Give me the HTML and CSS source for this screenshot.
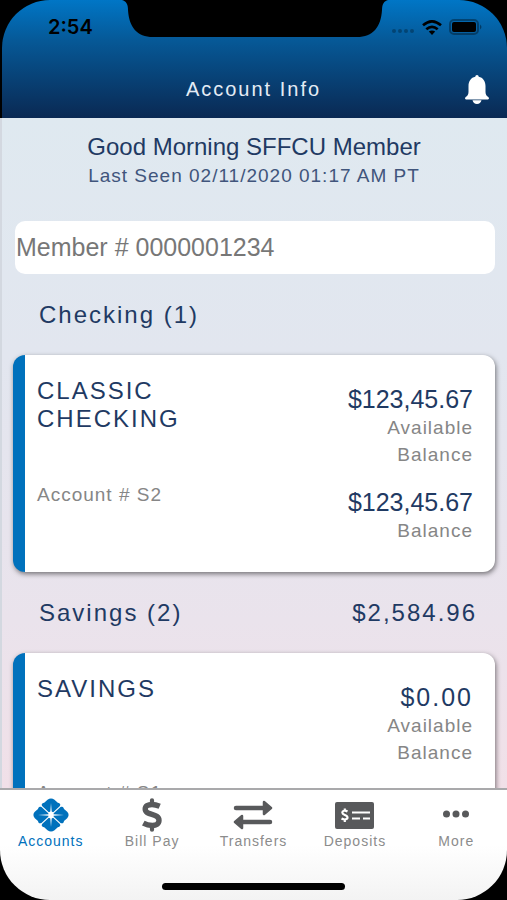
FILE: index.html
```
<!doctype html>
<html lang="en">

<head>
	<meta charset="utf-8">
	<title>Account Info</title>
	<meta name="theme-color" content="#0071bc"/>
	<meta name="viewport" content="width=device-width, initial-scale=1"/>
	<link rel="stylesheet" href="styles.css">
</head>

<body>
	<header>
		<svg class="notch" width="266" height="37" viewBox="0 0 266 37" aria-hidden="true">
			<path d="M0 0C4 1 6 4 6 10C7 27 15 37 31 37H235C251 37 259 27 260 10C260 4 262 1 266 0Z"/>
		</svg>
		<div class="status">
			<time>2:54</time>
			<div class="status-icons">
				<svg width="24" height="4" viewBox="0 0 24 4" aria-hidden="true">
					<g fill="#000" opacity=".28">
						<circle cx="3" cy="2" r="2"/><circle cx="9" cy="2" r="2"/><circle cx="15" cy="2" r="2"/><circle cx="21" cy="2" r="2"/>
					</g>
				</svg>
				<svg width="20" height="15" viewBox="0 0 20 15" aria-hidden="true">
					<path fill="none" stroke="#000" stroke-width="2.6" d="M1 5.3Q10-2.6 19 5.3M4.3 9.300Q10 4.300 15.7 9.300"/>
					<path d="M10 15L6.8 11.6Q10 9.2 13.2 11.6Z"/>
				</svg>
				<svg width="33" height="16" viewBox="0 0 33 16" aria-hidden="true">
					<rect x="1" y="1" width="28" height="14" rx="4" fill="none" stroke="#000" stroke-width="2" opacity=".35"/>
					<rect x="3" y="3" width="24" height="10" rx="2"/>
					<path d="M31 5.5Q34 8 31 10.5Z" opacity=".4"/>
				</svg>
			</div>
		</div>
		<div class="title">
			<h1>Account Info</h1>
			<button class="bell" type="button" aria-label="Notifications">
				<svg width="24" height="29" viewBox="0 0 24 29" aria-hidden="true">
					<path fill="#fff" d="M12 0C13 0 13.6 .7 13.7 1.800C18 2.500 20.500 6.500 20.500 11V17C20.500 19.500 21.800 21.200 23.300 22C24.400 23 24 24.500 23 24.500H1C0 24.500-.4 23 .7 22C2.200 21.200 3.500 19.500 3.500 17V11C3.500 6.500 6 2.500 10.300 1.800C10.400 .7 11 0 12 0ZM7.500 25.300H16.500C16 27.500 14.300 29 12 29S8 27.500 7.500 25.300Z"/>
				</svg>
			</button>
		</div>
	</header>

	<main>
		<div class="greeting">
			<h2>Good Morning SFFCU Member</h2>
			<p>Last Seen 02/11/2020 01:17 AM PT</p>
		</div>
		<input class="member" type="text" aria-label="Member number" value="Member # 0000001234" readonly>

		<section>
			<div class="group">
				<h2>Checking (1)</h2>
			</div>
			<article class="card">
				<h3>CLASSIC CHECKING</h3>
				<div class="figure">
					<div class="amount">$123,45.67</div>
					<div class="label">Available Balance</div>
				</div>
				<div class="number">Account # S2</div>
				<div class="figure">
					<div class="amount">$123,45.67</div>
					<div class="label">Balance</div>
				</div>
			</article>
		</section>

		<section>
			<div class="group">
				<h2>Savings (2)</h2>
				<span>$2,584.96</span>
			</div>
			<article class="card">
				<h3>SAVINGS</h3>
				<div class="figure">
					<div class="amount wide">$0.00</div>
					<div class="label">Available Balance</div>
				</div>
				<div class="number">Account # S1</div>
				<div class="figure">
					<div class="amount wide">$0.00</div>
				</div>
			</article>
		</section>
	</main>

	<nav>
		<div class="tabs">
			<a class="active" href="#accounts">
				<svg width="36" height="34" viewBox="0 0 36 34" aria-hidden="true">
					<g fill="#0071bc">
						<path d="M18 16.200L9.300 8.300C8 6.500 9 5.200 11.200 4.800L14.500 1.800Q18-.9 21.500 1.800L24.800 4.800C27 5.200 28 6.500 26.700 8.300Z"/>
						<path d="M18 17.800L9.300 25.700C8 27.500 9 28.800 11.200 29.200L14.500 32.200Q18 34.900 21.500 32.200L24.800 29.200C27 28.800 28 27.500 26.700 25.700Z"/>
						<path d="M17.200 17L8.500 9.100C6.500 8 5.300 9 5 11L1.800 13.800Q-1 17 1.800 20.200L5 23C5.300 25 6.500 26 8.500 24.900Z"/>
						<path d="M18.800 17L27.500 9.100C29.500 8 30.700 9 31 11L34.200 13.800Q37 17 34.200 20.200L31 23C30.700 25 29.500 26 27.500 24.900Z"/>
					</g>
					<path fill="#fff" d="M18 5L18.700 13.500L20.500 14.500L20.500 16.300L31 17L20.500 17.700L20.500 19.500L18.700 20.500L18 29L17.300 20.500L15.500 19.500L15.500 17.700L5 17L15.500 16.300L15.500 14.500L17.300 13.500Z"/>
				</svg>
				Accounts
			</a>
			<a href="#billpay">
				<svg width="20" height="34" viewBox="0 0 20 34" aria-hidden="true">
					<path fill="none" stroke="#58595b" stroke-width="4.200" stroke-linecap="round" d="M10 2.300V6M10 28V31.700"/>
					<path fill="none" stroke="#58595b" stroke-width="5.400" d="M17.700 8.300Q13.500 6.500 10 6.500C6 6.500 3.200 8 3.200 11C3.200 18 17 14.800 17 22.300C17 26 14 27.500 10.500 27.500Q5.500 27.500 1.300 25.200"/>
				</svg>
				Bill Pay
			</a>
			<a href="#transfers">
				<svg width="40" height="34" viewBox="0 0 40 34" aria-hidden="true">
					<g fill="#58595b" stroke="#58595b" stroke-linejoin="round" stroke-linecap="round">
						<path stroke-width="4.500" d="M3 10H31M9 24H37"/>
						<path stroke-width="2.500" d="M31 4L38 10L31 16ZM9 18L2 24L9 30Z"/>
					</g>
				</svg>
				Transfers
			</a>
			<a href="#deposits">
				<svg width="39" height="34" viewBox="0 0 39 34" aria-hidden="true">
					<rect y="4" width="39" height="27" rx="2" fill="#58595b"/>
					<path fill="none" stroke="#fff" stroke-width="2.200" d="M12.500 13.500C10 12 7.300 12.600 7.300 14.500C7.300 17.500 12.500 16.500 12.500 19.600C12.500 21.800 9 22 6.500 20.500M9.800 10.500V13M9.800 21.500V24M17 14.500H35M17 20.500H25M28 20.500H35"/>
				</svg>
				Deposits
			</a>
			<a href="#more">
				<svg width="26" height="34" viewBox="0 0 26 34" aria-hidden="true">
					<g fill="#58595b">
						<circle cx="3.500" cy="16" r="3.500"/><circle cx="13" cy="16" r="3.500"/><circle cx="22.500" cy="16" r="3.500"/>
					</g>
				</svg>
				More
			</a>
		</div>
		<div class="home-bar"></div>
	</nav>
</body></html>
```
FILE: styles.css
```
* {
	box-sizing: border-box;
}

body {
	margin: 0;
	height: 100vh;
	display: flex;
	flex-direction: column;
	background-color: #000;
	font-family: "Liberation Sans", Arial, sans-serif;
	color: #1f3a63;
	overflow: hidden;
}

h1, h2, h3, p {
	margin: 0;
	font-weight: normal;
}

header {
	position: relative;
	flex: none;
	margin-left: 2px;
	border-radius: 48px 48px 0 0;
	background: linear-gradient(#0076c6, #065896 35%, #0a2953);
}

.notch {
	position: absolute;
	top: 0;
	left: 50%;
	transform: translateX(-50%);
}

.status {
	display: flex;
	justify-content: space-between;
	align-items: center;
	height: 54px;
	padding: 0 25px 0 46px;
	font: 600 20px/24px Inter, sans-serif;
	color: #000;
}

.status-icons {
	display: flex;
	align-items: center;
	gap: 7px;
}

.status-icons svg:first-child {
	margin-top: 8px;
}

.title {
	display: grid;
	grid-template-columns: 1fr auto 1fr;
	align-items: center;
	height: 64px;
	padding: 6px 18px 0 16px;
}

.title h1 {
	grid-column: 2;
	font-size: 20px;
	letter-spacing: 2px;
	color: #e4ecf5;
}

.bell {
	justify-self: end;
	height: 29px;
	border: 0;
	padding: 0;
	background: none;
	cursor: pointer;
}

main {
	flex: 1;
	min-height: 0;
	overflow: auto;
	scrollbar-width: none;
	border-left: 2px solid #d3d8e0;
	padding: 0 12px 0 11px;
	background: linear-gradient(#dfe9f0, #e2e6ef 35%, #eae3ec 75%, #f1e0e8);
}

.greeting {
	padding: 14px 0 31px;
	text-align: center;
}

.greeting h2 {
	font-size: 24px;
	line-height: 30px;
}

.greeting p {
	font-size: 19px;
	line-height: 28px;
	letter-spacing: 1px;
	color: #40557c;
}

.member {
	display: block;
	width: calc(100% - 2px);
	height: 53px;
	margin-left: 2px;
	border: 0;
	border-radius: 10px;
	outline: 0;
	padding: 0 1px;
	background-color: #fff;
	font: 25px "Liberation Sans", Arial, sans-serif;
	color: #777;
}

.group {
	display: flex;
	justify-content: space-between;
	align-items: center;
	height: 81px;
	padding: 0 18px 0 26px;
	font-size: 24px;
	letter-spacing: 2px;
}

.group h2 {
	font-size: 24px;
}

.card {
	display: grid;
	grid-template-columns: 1fr auto;
	gap: 12px;
	border-left: 12px solid #0071bc;
	border-radius: 12px;
	padding: 22px 22px 28px 12px;
	background-color: #fff;
	box-shadow: 1px 2px 5px rgba(0,0,0,.5);
}

.card h3 {
	max-width: 200px;
	font-size: 24px;
	line-height: 28px;
	letter-spacing: 2px;
}

.figure {
	padding-top: 7px;
	text-align: right;
}

.amount {
	font-size: 25px;
	line-height: 30px;
}

.amount.wide {
	letter-spacing: 2px;
}

.label,
.number {
	font-size: 19px;
	line-height: 27px;
	letter-spacing: 1px;
	color: #868686;
}

.number {
	padding-top: 1px;
}

.label {
	max-width: 125px;
	margin-left: auto;
}

nav {
	flex: none;
	border-top: 2px solid #a9a9ab;
	border-radius: 0 0 50px 50px;
	padding: 8px 0 10px;
	background: linear-gradient(#fff 50%, #f3f3f3);
}

.tabs {
	display: grid;
	grid-template-columns: repeat(5, 1fr);
}

.tabs a {
	display: flex;
	flex-direction: column;
	align-items: center;
	font-size: 14px;
	line-height: 18px;
	letter-spacing: 1px;
	text-decoration: none;
	color: #8c8c8c;
}

.tabs a.active {
	color: #0071bc;
}

.home-bar {
	width: 36%;
	height: 7px;
	margin: 33px auto 0;
	border-radius: 4px;
	background-color: #000;
}
```
